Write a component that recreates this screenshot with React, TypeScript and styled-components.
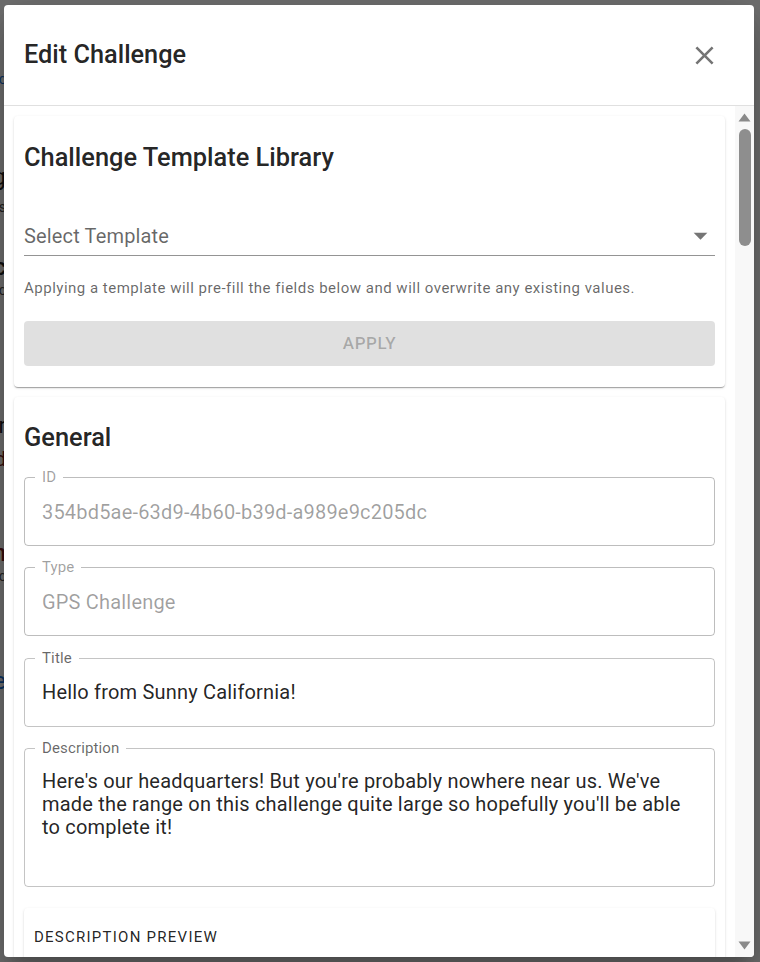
import React from "react";
import styled, { createGlobalStyle } from "styled-components";

const GlobalStyle = createGlobalStyle`
  html, body { margin: 0; padding: 0; }
  body {
    font-family: Roboto, "Liberation Sans", Arial, sans-serif;
    background: #dedede;
    width: 760px;
    height: 962px;
    overflow: hidden;
  }
  * { box-sizing: border-box; }
`;

const Page = styled.div`
  position: relative;
  width: 760px;
  height: 962px;
  overflow: hidden;
  background: #dedede;
`;

const BackPage = styled.div`
  width: 306px;
  margin-left: -300px;
  display: flex;
  flex-direction: column;
  align-items: flex-end;
  text-align: right;
`;

const BackLine = styled.div<{ $size: number; $mt: number; $color: string; $weight?: number }>`
  font-size: ${(p) => p.$size}px;
  line-height: ${(p) => Math.round(p.$size * 1.2)}px;
  margin-top: ${(p) => p.$mt}px;
  color: ${(p) => p.$color};
  font-weight: ${(p) => p.$weight ?? 400};
  white-space: nowrap;
`;

const Backdrop = styled.div`
  position: absolute;
  inset: 0;
  background: rgba(0, 0, 0, 0.5);
  display: flex;
  align-items: flex-start;
  padding: 5px 6px 5px 4px;
`;

const Dialog = styled.div`
  width: 750px;
  height: 952px;
  background: #fff;
  border-radius: 4px;
  box-shadow: 0px 11px 15px -7px rgba(0, 0, 0, 0.2), 0px 24px 38px 3px rgba(0, 0, 0, 0.14),
    0px 9px 46px 8px rgba(0, 0, 0, 0.12);
  display: flex;
  flex-direction: column;
  overflow: hidden;
  color: rgba(0, 0, 0, 0.87);
`;

const Header = styled.div`
  flex: 0 0 101px;
  display: flex;
  align-items: center;
  justify-content: space-between;
  padding: 0 26px 0 20px;
  border-bottom: 1px solid #e0e0e0;
`;

const Title = styled.h2`
  margin: 0;
  font-size: 25.3px;
  line-height: 32px;
  font-weight: 500;
  color: rgba(0, 0, 0, 0.87);
`;

const CloseButton = styled.button`
  width: 48px;
  height: 48px;
  border: 0;
  padding: 0;
  background: transparent;
  display: flex;
  align-items: center;
  justify-content: center;
  color: #757575;
  cursor: pointer;
`;

const Body = styled.div`
  flex: 1 1 auto;
  min-height: 0;
  display: flex;
`;

const ScrollArea = styled.div`
  flex: 1 1 auto;
  overflow: hidden;
  padding: 10px 10px 0 10px;
  display: flex;
  flex-direction: column;
  gap: 10px;
`;

const ScrollTrack = styled.div`
  flex: 0 0 19px;
  background: #f8f8f8;
  display: flex;
  flex-direction: column;
  align-items: center;
  padding: 7px 0 7px 0;
`;

const ScrollArrow = styled.svg`
  width: 13px;
  height: 9px;
  fill: #8a8a8a;
  flex: 0 0 auto;
`;

const ScrollThumb = styled.div`
  margin-top: 7px;
  width: 12px;
  height: 117px;
  border-radius: 6px;
  background: #8e8e8e;
`;

const ScrollSpacer = styled.div`
  flex: 1 1 auto;
`;

const Card = styled.section<{ $pt?: number; $pb?: number }>`
  flex: 0 0 auto;
  background: #fff;
  border-radius: 4px;
  box-shadow: 0px 2px 1px -1px rgba(0, 0, 0, 0.2), 0px 1px 1px 0px rgba(0, 0, 0, 0.14),
    0px 1px 3px 0px rgba(0, 0, 0, 0.12);
  padding: ${(p) => p.$pt ?? 24}px 10px ${(p) => p.$pb ?? 21}px;
  display: flex;
  flex-direction: column;
`;

const CardTitle = styled.h3`
  margin: 0;
  font-size: 25.4px;
  line-height: 32px;
  font-weight: 500;
  color: rgba(0, 0, 0, 0.87);
`;

const SelectRow = styled.div`
  margin-top: 44px;
  height: 39px;
  border-bottom: 1px solid rgba(0, 0, 0, 0.42);
  display: flex;
  align-items: flex-end;
  justify-content: space-between;
  padding-bottom: 7px;
`;

const SelectText = styled.span`
  font-size: 20px;
  line-height: 24px;
  letter-spacing: 0.15px;
  color: rgba(0, 0, 0, 0.6);
`;

const ArrowIcon = styled.svg`
  width: 33px;
  height: 33px;
  margin-bottom: -4px;
  margin-right: -2px;
  fill: rgba(0, 0, 0, 0.54);
`;

const Helper = styled.p`
  margin: 22px 0 0;
  font-size: 15px;
  line-height: 20px;
  letter-spacing: 0.5px;
  color: rgba(0, 0, 0, 0.6);
`;

const ApplyButton = styled.button`
  margin-top: 23px;
  height: 45px;
  border: 0;
  border-radius: 4px;
  background: rgba(0, 0, 0, 0.12);
  color: rgba(0, 0, 0, 0.26);
  font-family: inherit;
  font-size: 17px;
  font-weight: 500;
  letter-spacing: 0.6px;
  text-transform: uppercase;
  padding: 0 0 1px;
`;

const FieldStack = styled.div`
  margin-top: 24px;
  display: flex;
  flex-direction: column;
  gap: 21.3px;
`;

const Field = styled.div<{ $h: number; $multi?: boolean; $disabled?: boolean }>`
  position: relative;
  flex: 0 0 auto;
  height: ${(p) => p.$h}px;
  border: 1px solid ${(p) => (p.$disabled ? "rgba(0,0,0,0.26)" : "rgba(0,0,0,0.23)")};
  border-radius: 4px;
  padding: ${(p) => (p.$multi ? "21.5px 17px 0" : "0 17px")};
  display: flex;
  align-items: ${(p) => (p.$multi ? "flex-start" : "center")};
`;

const FieldLabel = styled.label<{ $disabled?: boolean }>`
  position: absolute;
  top: -10px;
  left: 10px;
  padding: 0 7px;
  background: #fff;
  font-size: 15px;
  line-height: 18px;
  letter-spacing: 0.14px;
  color: ${(p) => (p.$disabled ? "rgba(0,0,0,0.38)" : "rgba(0,0,0,0.6)")};
`;

const FieldValue = styled.div<{ $disabled?: boolean; $multi?: boolean }>`
  font-size: 20px;
  line-height: ${(p) => (p.$multi ? "23px" : "24px")};
  letter-spacing: 0.1875px;
  color: ${(p) => (p.$disabled ? "rgba(0,0,0,0.38)" : "rgba(0,0,0,0.87)")};
`;

const PreviewCard = styled.div`
  flex: 0 0 auto;
  background: #fff;
  border-radius: 4px;
  box-shadow: 0px 2px 1px -1px rgba(0, 0, 0, 0.2), 0px 1px 1px 0px rgba(0, 0, 0, 0.14),
    0px 1px 3px 0px rgba(0, 0, 0, 0.12);
  padding: 19px 10px 16px;
`;

const Overline = styled.div`
  font-size: 15px;
  line-height: 20px;
  letter-spacing: 1.25px;
  text-transform: uppercase;
  color: rgba(0, 0, 0, 0.87);
`;

const PreviewBody = styled.p`
  margin: 16px 0 0;
  font-size: 20px;
  line-height: 28px;
  color: rgba(0, 0, 0, 0.87);
`;

type FieldProps = { label: string; value: string; disabled?: boolean; multi?: boolean; h?: number };

function OutlinedField({ label, value, disabled, multi, h }: FieldProps) {
  return (
    <Field $h={h ?? 69} $multi={multi} $disabled={disabled}>
      <FieldLabel $disabled={disabled}>{label}</FieldLabel>
      <FieldValue $disabled={disabled} $multi={multi}>
        {value}
      </FieldValue>
    </Field>
  );
}

const description =
  "Here's our headquarters! But you're probably nowhere near us. We've made the range on this challenge quite large so hopefully you'll be able to complete it!";

export default function App() {
  return (
    <Page>
      <GlobalStyle />
      <BackPage>
        <BackLine $size={14} $mt={71} $color="#1565c0">Challenges list c</BackLine>
        <BackLine $size={24} $mt={75} $color="#222">Hello from Sunny Calig</BackLine>
        <BackLine $size={14} $mt={7} $color="#444">GPS challenge details</BackLine>
        <BackLine $size={24} $mt={37} $color="#222" $weight={500}>Headquarters c</BackLine>
        <BackLine $size={14} $mt={0} $color="#444">Created by admin c</BackLine>
        <BackLine $size={22} $mt={114} $color="#222">Another challenger</BackLine>
        <BackLine $size={20} $mt={8} $color="#6d1b1b">Expired</BackLine>
        <BackLine $size={24} $mt={68} $color="#6d1b1b" $weight={500}>Campaign n</BackLine>
        <BackLine $size={14} $mt={0} $color="#444">Location c</BackLine>
        <BackLine $size={24} $mt={82} $color="#1565c0">Visit the office e</BackLine>
      </BackPage>
      <Backdrop>
        <Dialog role="dialog">
          <Header>
            <Title>Edit Challenge</Title>
            <CloseButton aria-label="close">
              <svg width="31" height="31" viewBox="0 0 24 24" fill="currentColor">
                <path d="M19 6.41 17.59 5 12 10.59 6.41 5 5 6.41 10.59 12 5 17.59 6.41 19 12 13.41 17.59 19 19 17.59 13.41 12z" />
              </svg>
            </CloseButton>
          </Header>
          <Body>
            <ScrollArea>
              <Card $pt={25}>
                <CardTitle>Challenge Template Library</CardTitle>
                <SelectRow>
                  <SelectText>Select Template</SelectText>
                  <ArrowIcon viewBox="0 0 24 24">
                    <path d="M7 10l5 5 5-5z" />
                  </ArrowIcon>
                </SelectRow>
                <Helper>
                  Applying a template will pre-fill the fields below and will overwrite any existing values.
                </Helper>
                <ApplyButton disabled>Apply</ApplyButton>
              </Card>
              <Card>
                <CardTitle>General</CardTitle>
                <FieldStack>
                  <OutlinedField label="ID" value="354bd5ae-63d9-4b60-b39d-a989e9c205dc" disabled />
                  <OutlinedField label="Type" value="GPS Challenge" disabled />
                  <OutlinedField label="Title" value="Hello from Sunny California!" />
                  <OutlinedField label="Description" value={description} multi h={139} />
                  <PreviewCard>
                    <Overline>Description preview</Overline>
                    <PreviewBody>{description}</PreviewBody>
                  </PreviewCard>
                  <OutlinedField label="Points" value="100" />
                  <OutlinedField label="Range (meters)" value="50000" />
                </FieldStack>
              </Card>
            </ScrollArea>
            <ScrollTrack aria-hidden="true">
              <ScrollArrow viewBox="0 0 13 9">
                <path d="M6.5 0.5 L12.5 8.5 L0.5 8.5 Z" />
              </ScrollArrow>
              <ScrollThumb />
              <ScrollSpacer />
              <ScrollArrow viewBox="0 0 13 9">
                <path d="M0.5 0.5 L12.5 0.5 L6.5 8.5 Z" />
              </ScrollArrow>
            </ScrollTrack>
          </Body>
        </Dialog>
      </Backdrop>
    </Page>
  );
}
